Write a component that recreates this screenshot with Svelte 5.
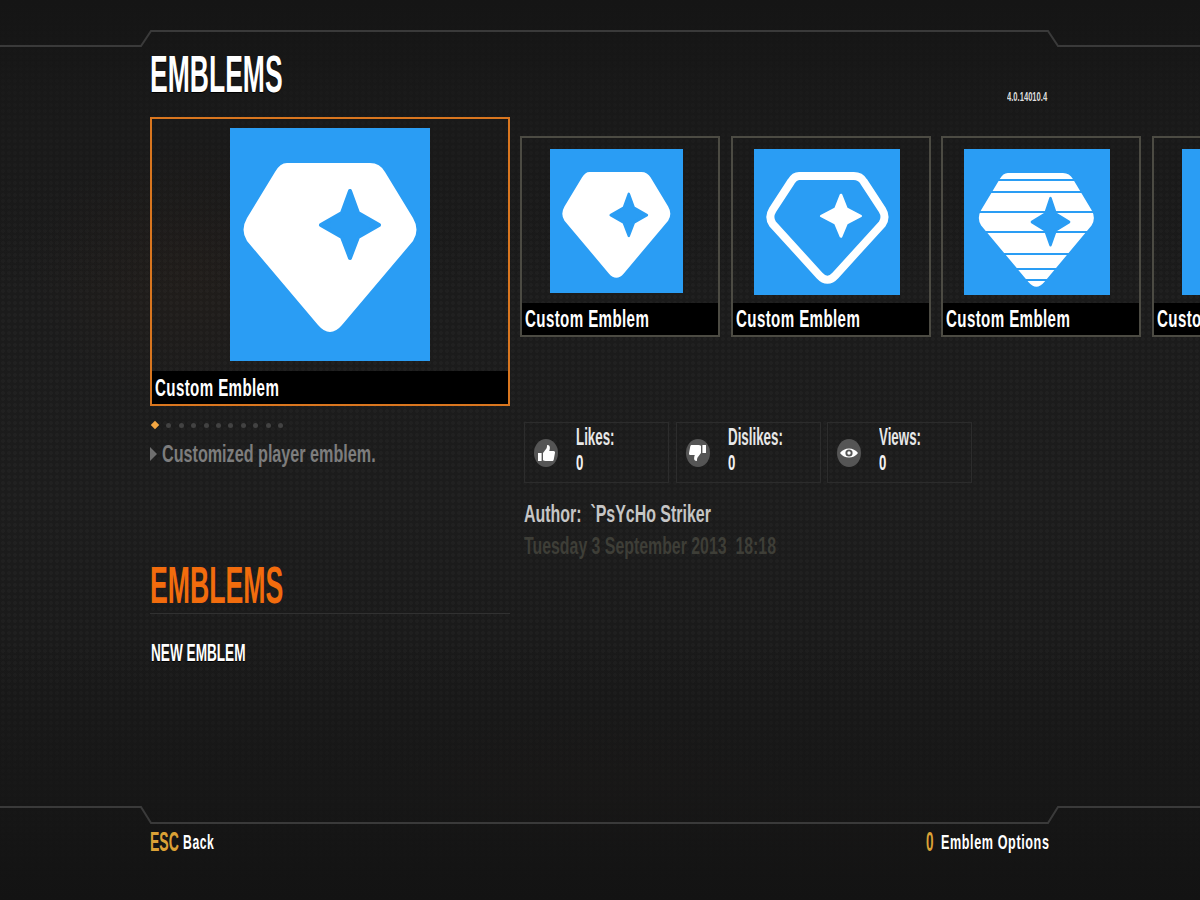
<script>
  const shape = "M57 35H140Q150 35 155 44L183 90Q190 102 183 113L112 197Q100 211 88 197L17 113Q10 102 17 90L45 44Q50 35 57 35Z";
  const star = "120,63 128,85 149,97 128,109 120,130 112,109 91,97 112,85";
  const stripes = [31, 43, 63, 83, 105, 120, 131];
  const dots = Array.from({ length: 10 }, (_, i) => i);
  const stats = [
    { label: "Likes:", icon: "up" },
    { label: "Dislikes:", icon: "down" },
    { label: "Views:", icon: "eye" }
  ];
</script>

{#snippet bar(cls)}
  <div class="bar {cls}"><span class="t label">Custom Emblem</span></div>
{/snippet}

{#snippet thumb()}
  <path d="M2 10h3.6v8H2zM7 10l3.4-4.4c.5-.8.6-2 .7-3.6 1.9-.2 2.8 1 2.8 2.8 0 1.2-.3 2.200-.7 3.200h4.300c1 0 1.700.8 1.500 1.800l-1.300 7c-.2.800-.8 1.200-1.600 1.200H9.500c-1 0-1.700-.4-2.500-.8z" fill="#fff" />
{/snippet}

<div class="page">
  <svg class="frame" viewBox="0 0 1200 900" aria-hidden="true">
    <path d="M0 46H141L151 31H1048L1058 46H1200" />
    <path d="M0 807H141L151 823H1048L1058 807H1200" />
  </svg>

  <header class="header">
    <h1 class="t title">EMBLEMS</h1>
    <span class="t version">4.0.14010.4</span>
  </header>

  <main class="main">
    <section class="left">
      <div class="card big">
        <div class="well">
          <svg class="emblem e-big" viewBox="0 0 200 233">
            <path d={shape} fill="#fff" />
            <polygon points={star} fill="#2a9df4" stroke="#2a9df4" stroke-width="4" stroke-linejoin="round" />
          </svg>
        </div>
        {@render bar("bar-big")}
      </div>

      <div class="dots">
        <span class="diamond"></span>
        {#each dots as d (d)}<span class="dot"></span>{/each}
      </div>

      <p class="desc"><span class="tri"></span><span class="t desc-text">Customized player emblem.</span></p>

      <h2 class="t sub">EMBLEMS</h2>
      <div class="rule"></div>
      <div class="t item">NEW EMBLEM</div>
    </section>

    <section class="right">
      <div class="strip">
        <div class="card small">
          <div class="well inset-wide">
            <svg class="emblem e-1" viewBox="-6.200 -1.700 213 230" preserveAspectRatio="none">
              <path d={shape} fill="#fff" />
              <g transform="translate(0 7)">
                <polygon points={star} fill="#2a9df4" stroke="#2a9df4" stroke-width="4" stroke-linejoin="round" />
              </g>
            </svg>
          </div>
          {@render bar("")}
        </div>
        <div class="card small">
          <div class="well inset-narrow">
            <svg class="emblem e-2" viewBox="0 0 146 146">
              <g transform="translate(16 27) scale(.66 .614) translate(-13 -35)">
                <path d={shape} fill="none" stroke="#fff" stroke-width="8" vector-effect="non-scaling-stroke" />
              </g>
              <g transform="translate(87 67) scale(.68 .62) translate(-120 -97)">
                <polygon points={star} fill="#fff" stroke="#fff" stroke-width="4" stroke-linejoin="round" />
              </g>
            </svg>
          </div>
          {@render bar("")}
        </div>
        <div class="card small">
          <div class="well inset-narrow">
            <svg class="emblem e-3" viewBox="0 0 145 146">
              <g transform="translate(14 24) scale(.665 .673) translate(-13 -35)">
                <path d={shape} fill="#fff" />
              </g>
              {#each stripes as y (y)}
                <line x1="0" x2="145" y1={y} y2={y} stroke="#2a9df4" stroke-width="2" />
              {/each}
              <g transform="translate(86 73) scale(.64 .7) translate(-120 -97)">
                <polygon points={star} fill="#2a9df4" stroke="#2a9df4" stroke-width="4" stroke-linejoin="round" />
              </g>
            </svg>
          </div>
          {@render bar("")}
        </div>
        <div class="card small">
          <div class="well inset-wide">
            <div class="emblem e-4"></div>
          </div>
          {@render bar("")}
        </div>
      </div>

      <div class="stats">
        {#each stats as s (s.label)}
          <div class="stat">
            <svg class="stat-icon" viewBox="0 0 24 28">
              <ellipse cx="12" cy="14" rx="12" ry="14" fill="#555" />
              {#if s.icon === "up"}
                <g transform="translate(2 4)">{@render thumb()}</g>
              {:else if s.icon === "down"}
                <g transform="translate(22 24) rotate(180)">{@render thumb()}</g>
              {:else}
                <path d="M3 14c4.500-6 13.500-6 18 0-4.500 6-13.500 6-18 0z" fill="#fff" />
                <circle cx="12" cy="14" r="3.600" fill="#555" />
                <circle cx="12" cy="14" r="1.700" fill="#fff" />
              {/if}
            </svg>
            <div class="stat-text">
              <span class="t stat-label">{s.label}</span>
              <span class="t stat-value">0</span>
            </div>
          </div>
        {/each}
      </div>

      <div class="t author">Author:&nbsp; `PsYcHo Striker</div>
      <div class="t date">Tuesday 3 September 2013&nbsp; 18:18</div>
    </section>
  </main>

  <footer class="footer">
    <div class="hint"><span class="t key">ESC</span><span class="t action back">Back</span></div>
    <div class="hint hint-right"><span class="t key">0</span><span class="t action opts">Emblem Options</span></div>
  </footer>
</div>

<style>
  :global(body) {
    margin: 0;
    background: #171717;
  }
  .page {
    position: relative;
    box-sizing: border-box;
    width: 1200px;
    height: 900px;
    padding-left: 150px;
    display: flex;
    flex-direction: column;
    overflow: hidden;
    font-family: "Liberation Sans", Arial, sans-serif;
    color: #fff;
    background:
      linear-gradient(180deg, #151515 0, rgba(24, 24, 24, .6) 90px, transparent 300px, transparent 640px, rgba(22, 22, 22, .8) 800px, #131313 900px),
      radial-gradient(circle at 3px 3px, rgba(255, 255, 255, .022) 1.6px, transparent 2.2px) 0 0 / 6px 6px,
      radial-gradient(ellipse 160px 130px at 190px 270px, rgba(110, 55, 15, .07), transparent),
      radial-gradient(ellipse 220px 90px at 590px 800px, rgba(110, 55, 15, .05), transparent),
      radial-gradient(ellipse 200px 90px at 860px 860px, rgba(110, 55, 15, .05), transparent),
      linear-gradient(180deg, #141414 0, #1a1a1a 120px, #1c1c1c 500px, #181818 780px, #131313 900px);
  }
  .frame {
    position: absolute;
    inset: 0;
    width: 1200px;
    height: 900px;
    pointer-events: none;
  }
  .frame path {
    fill: none;
    stroke: #3a3a3a;
    stroke-width: 2;
  }
  .t {
    display: inline-block;
    font-weight: 700;
    white-space: nowrap;
    transform-origin: 0 50%;
  }
  .header {
    height: 117px;
    width: 897px;
    box-sizing: border-box;
    padding-top: 50px;
    display: flex;
    justify-content: space-between;
    align-items: flex-start;
    flex: none;
  }
  .title {
    margin: 0;
    font-size: 51px;
    line-height: 50px;
    transform: scaleX(.52);
    width: 133px;
    text-shadow: 0 1px 1px #000;
  }
  .version {
    font-size: 13px;
    line-height: 14px;
    margin-top: 40px;
    width: 40px;
    color: #ddd;
    transform: scaleX(.585);
  }
  .main {
    display: flex;
    gap: 10px;
    flex: 1;
    min-height: 0;
  }
  .left {
    width: 360px;
    flex: none;
  }
  .card {
    box-sizing: border-box;
    display: flex;
    flex-direction: column;
    flex: none;
  }
  .well {
    flex: 1;
    min-height: 0;
    display: flex;
    justify-content: center;
    align-items: flex-start;
  }
  .big {
    width: 360px;
    height: 289px;
    border: 2px solid #d9761f;
  }
  .big .well {
    padding-top: 9px;
  }
  .small {
    width: 200px;
    height: 201px;
    border: 2px solid #4c4b43;
  }
  .small .well {
    padding-top: 11px;
    justify-content: flex-start;
  }
  .small .inset-wide {
    padding-left: 28px;
  }
  .small .inset-narrow {
    padding-left: 21px;
  }
  .emblem {
    display: block;
    background: #2a9df4;
    flex: none;
  }
  .e-big {
    width: 200px;
    height: 233px;
  }
  .e-1 {
    width: 133px;
    height: 144px;
  }
  .e-2,
  .e-3,
  .e-4 {
    width: 146px;
    height: 146px;
  }
  .bar {
    height: 32px;
    background: #000;
    flex: none;
    display: flex;
    align-items: center;
    padding-left: 3px;
  }
  .bar-big {
    height: 33px;
  }
  .label {
    font-size: 24px;
    line-height: 32px;
    letter-spacing: .6px;
    transform: scaleX(.63);
  }
  .dots {
    height: 10px;
    margin-top: 14px;
    display: flex;
    align-items: center;
    padding-left: 2px;
    gap: 7.400px;
  }
  .diamond {
    width: 6px;
    height: 6px;
    margin-right: 1px;
    background: #f5a742;
    transform: rotate(45deg);
  }
  .dot {
    width: 5px;
    height: 5px;
    border-radius: 50%;
    background: #424242;
  }
  .desc {
    margin: 14px 0 0;
    height: 20px;
    display: flex;
    align-items: center;
    gap: 5px;
  }
  .tri {
    width: 0;
    height: 0;
    border-left: 7px solid #6e6e6e;
    border-top: 7px solid transparent;
    border-bottom: 7px solid transparent;
    flex: none;
  }
  .desc-text {
    font-size: 24px;
    line-height: 20px;
    color: #7d7d7d;
    transform: scaleX(.673);
  }
  .sub {
    margin: 96px 0 0;
    font-size: 52px;
    line-height: 50px;
    color: #f26c0d;
    transform: scaleX(.513);
  }
  .rule {
    height: 1px;
    margin-top: 3px;
    background: #313131;
  }
  .item {
    display: block;
    margin-top: 28px;
    margin-left: 1px;
    font-size: 23px;
    line-height: 22px;
    transform: scaleX(.592);
    text-shadow: 0 1px 1px #000;
  }
  .right {
    min-width: 0;
    flex: 1;
  }
  .strip {
    margin-top: 19px;
    display: flex;
    gap: 10.500px;
  }
  .stats {
    display: flex;
    gap: 6.500px;
    margin: 85px 0 0 4px;
  }
  .stat {
    box-sizing: border-box;
    width: 145px;
    height: 61px;
    border: 1px solid #2c2c2c;
    display: flex;
    align-items: center;
    padding-left: 9px;
    gap: 18px;
  }
  .stat-icon {
    width: 24px;
    height: 28px;
    flex: none;
  }
  .stat-text {
    display: flex;
    flex-direction: column;
    margin-top: -5px;
  }
  .stat-label {
    font-size: 23px;
    line-height: 26px;
    color: #e8e8e8;
    transform: scaleX(.58);
  }
  .stat-value {
    font-size: 22px;
    line-height: 26px;
    color: #f2f2f2;
    transform: scaleX(.6);
  }
  .author {
    display: block;
    margin: 20px 0 0 4px;
    font-size: 23px;
    line-height: 22px;
    color: #c6c6c6;
    transform: scaleX(.693);
  }
  .date {
    display: block;
    margin: 10px 0 0 4px;
    font-size: 23px;
    line-height: 22px;
    color: #3e3e37;
    transform: scaleX(.69);
  }
  .footer {
    flex: none;
    width: 900px;
    display: flex;
    justify-content: space-between;
    padding-bottom: 47px;
  }
  .hint {
    height: 22px;
    display: flex;
    align-items: center;
    gap: 4px;
  }
  .hint-right {
    width: 124px;
  }
  .key {
    font-size: 27px;
    line-height: 22px;
    color: #dba136;
    transform: scaleX(.52);
    width: 29px;
  }
  .hint-right .key {
    width: 10px;
    transform: scaleX(.5);
    margin-right: 1px;
  }
  .action {
    font-size: 21px;
    line-height: 20px;
    letter-spacing: 1px;
  }
  .back {
    transform: scaleX(.58);
  }
  .opts {
    transform: scaleX(.6);
  }
</style>
